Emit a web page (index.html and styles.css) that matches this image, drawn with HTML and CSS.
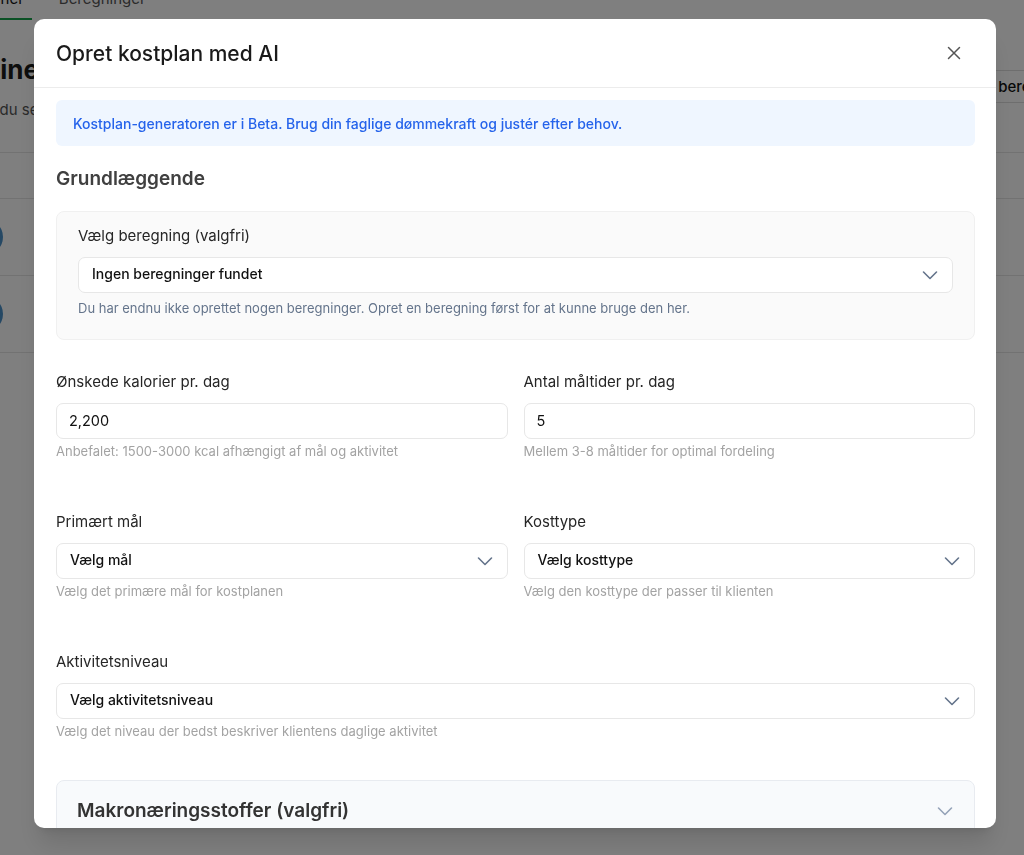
FILE: index.html
```html
<!DOCTYPE html>
<html lang="da">
<head>
	<meta charset="UTF-8">
	<meta name="viewport" content="width=device-width, initial-scale=1">
	<title>Opret kostplan med AI</title>
	<link rel="stylesheet" href="styles.css">
</head>
<body>

	<!-- page behind the dialog -->
	<div class="bg-page">
		<nav class="bg-tabs">
			<span class="bg-tab active">Kostplaner</span>
			<span class="bg-tab">Beregninger</span>
		</nav>
		<div class="bg-head">
			<div>
				<h1 class="bg-title">Mine kostplaner</h1>
				<p class="bg-sub">Her kan du se og administrere dine kostplaner</p>
			</div>
			<span class="bg-button">Ny beregning</span>
		</div>
		<div class="bg-table">
			<div class="bg-row bg-row-head"></div>
			<div class="bg-row"><span class="bg-avatar"></span></div>
			<div class="bg-row"><span class="bg-avatar"></span></div>
		</div>
	</div>

	<div class="overlay">
		<div class="modal">
			<div class="modal-header">
				<h2 class="modal-title">Opret kostplan med AI</h2>
				<span class="close">
					<svg width="16" height="16" viewBox="0 0 16 16" fill="none" stroke="#555" stroke-width="1.5" stroke-linecap="round">
						<path d="M2.5 2.5 13.5 13.5M13.5 2.5 2.5 13.5"/>
					</svg>
				</span>
			</div>

			<div class="modal-body">
				<div class="beta-note">Kostplan-generatoren er i Beta. Brug din faglige dømmekraft og justér efter behov.</div>

				<h3 class="section-title">Grundlæggende</h3>

				<div class="soft-card">
					<label class="field-label">Vælg beregning (valgfri)</label>
					<div class="select">
						<span>Ingen beregninger fundet</span>
						<svg width="18" height="18" viewBox="0 0 18 18" fill="none" stroke="#64748b" stroke-width="1.6" stroke-linecap="round" stroke-linejoin="round"><path d="M2.5 6 9 12.5 15.5 6"/></svg>
					</div>
					<p class="help help-slate">Du har endnu ikke oprettet nogen beregninger. Opret en beregning først for at kunne bruge den her.</p>
				</div>

				<div class="field-grid">
					<div class="field">
						<label class="field-label">Ønskede kalorier pr. dag</label>
						<input class="input" type="text" value="2,200">
						<p class="help">Anbefalet: 1500-3000 kcal afhængigt af mål og aktivitet</p>
					</div>
					<div class="field">
						<label class="field-label">Antal måltider pr. dag</label>
						<input class="input" type="text" value="5">
						<p class="help">Mellem 3-8 måltider for optimal fordeling</p>
					</div>
					<div class="field">
						<label class="field-label">Primært mål</label>
						<div class="select">
							<span>Vælg mål</span>
							<svg width="18" height="18" viewBox="0 0 18 18" fill="none" stroke="#64748b" stroke-width="1.6" stroke-linecap="round" stroke-linejoin="round"><path d="M2.5 6 9 12.5 15.5 6"/></svg>
						</div>
						<p class="help">Vælg det primære mål for kostplanen</p>
					</div>
					<div class="field">
						<label class="field-label">Kosttype</label>
						<div class="select">
							<span>Vælg kosttype</span>
							<svg width="18" height="18" viewBox="0 0 18 18" fill="none" stroke="#64748b" stroke-width="1.6" stroke-linecap="round" stroke-linejoin="round"><path d="M2.5 6 9 12.5 15.5 6"/></svg>
						</div>
						<p class="help">Vælg den kosttype der passer til klienten</p>
					</div>
					<div class="field field-wide">
						<label class="field-label">Aktivitetsniveau</label>
						<div class="select">
							<span>Vælg aktivitetsniveau</span>
							<svg width="18" height="18" viewBox="0 0 18 18" fill="none" stroke="#64748b" stroke-width="1.6" stroke-linecap="round" stroke-linejoin="round"><path d="M2.5 6 9 12.5 15.5 6"/></svg>
						</div>
						<p class="help">Vælg det niveau der bedst beskriver klientens daglige aktivitet</p>
					</div>
				</div>

				<div class="collapse-card">
					<div class="collapse-head">
						<span class="collapse-title">Makronæringsstoffer (valgfri)</span>
						<svg width="18" height="18" viewBox="0 0 18 18" fill="none" stroke="#94a3b8" stroke-width="1.6" stroke-linecap="round" stroke-linejoin="round"><path d="M2.5 6 9 12.5 15.5 6"/></svg>
					</div>
				</div>
			</div>
		</div>
	</div>
</body>
</html>
```

FILE: styles.css
```css
:root {
	--col-text: #1c1c1c;
	--col-label: #262626;
	--col-help: #a3a3a3;
	--col-help-slate: #64748b;
	--col-border: #e7e7e7;
	--col-blue: #2563eb;
}
* {
	box-sizing: border-box;
}
body {
	margin: 0;
	padding: 0;
	width: 1024px;
	height: 855px;
	overflow: hidden;
	background: #fff;
	font-family: Inter, 'Noto Sans', 'DejaVu Sans', sans-serif;
	color: var(--col-text);
}
h1, h2, h3, p {
	margin: 0;
}

/* ---- page behind the dialog ---- */
.bg-page {
	width: 1200px;
	margin: -22px 0 0 -60px;
}
.bg-tabs {
	display: flex;
	height: 42px;
	align-items: center;
	font-size: 15px;
	color: #555;
}
.bg-tab {
	padding: 0 8px;
	height: 42px;
	line-height: 42px;
	margin-right: 19px;
}
.bg-tab.active {
	color: #111;
	border-bottom: 2px solid #16a34a;
}
.bg-head {
	display: flex;
	justify-content: space-between;
	align-items: flex-start;
	margin-top: 34px;
	padding-left: 36px;
	width: 1146px;
}
.bg-title {
	font-size: 26px;
	font-weight: 700;
	line-height: 32px;
}
.bg-sub {
	font-size: 15px;
	line-height: 20px;
	margin-top: 14px;
	margin-left: -36px;
	color: #555;
}
.bg-button {
	margin-top: 16px;
	height: 33px;
	line-height: 31px;
	padding: 0 14px;
	border: 1px solid #ddd;
	border-radius: 6px;
	font-size: 15px;
	font-weight: 500;
	color: #111;
}
.bg-table {
	margin-top: 32px;
	border-top: 1px solid #e5e5e5;
}
.bg-row {
	height: 77px;
	border-bottom: 1px solid #e5e5e5;
	display: flex;
	align-items: center;
	padding-left: 27px;
}
.bg-row-head {
	height: 46px;
}
.bg-avatar {
	width: 36px;
	height: 36px;
	border-radius: 50%;
	background: #4a90c8;
}

/* ---- dialog ---- */
.overlay {
	position: fixed;
	inset: 0;
	background: rgba(0, 0, 0, 0.5);
	padding: 19px 28px 27px 34px;
	display: flex;
	align-items: flex-start;
}
.modal {
	width: 962px;
	height: 809px;
	background: #fff;
	border-radius: 10px;
	overflow: hidden;
	display: flex;
	flex-direction: column;
	box-shadow: 0 20px 25px -5px rgba(0,0,0,0.12), 0 8px 10px -6px rgba(0,0,0,0.1);
}
.modal-header {
	flex: none;
	height: 69px;
	display: flex;
	align-items: center;
	justify-content: space-between;
	padding: 0 26px 0 22px;
	border-bottom: 1px solid #ececec;
}
.modal-title {
	font-size: 21px;
	font-weight: 500;
	color: #1a1a1a;
}
.close {
	width: 32px;
	height: 32px;
	display: flex;
	align-items: center;
	justify-content: center;
}
.modal-body {
	padding: 12px 21px 0 22px;
}
.beta-note {
	height: 46px;
	display: flex;
	align-items: center;
	padding: 0 17px;
	border-radius: 6px;
	background: #eff6ff;
	color: var(--col-blue);
	font-size: 14px;
	font-weight: 500;
}
.section-title {
	margin: 21px 0 20px;
	font-size: 19px;
	line-height: 24px;
	font-weight: 600;
	color: #404040;
}
.soft-card {
	background: #fafafa;
	border: 1px solid #f0f0f0;
	border-radius: 8px;
	padding: 13px 21px 23px;
}
.field-label {
	display: block;
	font-size: 15px;
	line-height: 22px;
	margin-bottom: 10px;
	color: var(--col-label);
}
.select,
.input {
	width: 100%;
	height: 36px;
	border: 1px solid var(--col-border);
	border-radius: 7px;
	background: #fff;
	font-family: inherit;
	font-size: 14px;
	color: #111;
}
.select {
	display: flex;
	align-items: center;
	justify-content: space-between;
	padding: 0 13px;
	font-weight: 500;
}
.select span {
	padding-bottom: 4px;
}
.input {
	display: block;
	padding: 0 12px 1px;
	outline: none;
	font-size: 14.5px;
}
.help {
	margin-top: 4px;
	font-size: 13px;
	line-height: 16px;
	color: var(--col-help);
}
.help-slate {
	margin-top: 7px;
	color: var(--col-help-slate);
}
.field-grid {
	margin-top: 31px;
	display: grid;
	grid-template-columns: 1fr 1fr;
	column-gap: 16px;
	row-gap: 52px;
}
.field-wide {
	grid-column: 1 / -1;
}
.collapse-card {
	margin-top: 41px;
	background: #f8fafc;
	border: 1px solid #e8ebf0;
	border-radius: 8px;
	padding: 0 20px;
}
.collapse-head {
	display: flex;
	align-items: center;
	justify-content: space-between;
	padding: 18px 0;
}
.collapse-title {
	font-size: 19px;
	line-height: 24px;
	font-weight: 600;
	color: #333;
}
```
